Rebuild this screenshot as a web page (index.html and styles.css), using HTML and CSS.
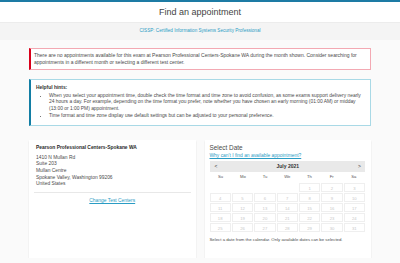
FILE: index.html
```html
<!DOCTYPE html>
<html lang="en">
<head>
<meta charset="utf-8">
<title>Find an appointment</title>
<link rel="stylesheet" href="styles.css">
</head>
<body>
<div class="topbar"></div>
<header class="page-head"><h1>Find an appointment</h1></header>
<div class="exam-band"><a href="#">CISSP: Certified Information Systems Security Professional</a></div>
<main class="content">
  <div class="alert">There are no appointments available for this exam at Pearson Professional Centers-Spokane WA during the month shown. Consider searching for appointments in a different month or selecting a different test center.</div>
  <div class="hints">
    <p class="hints-title">Helpful hints:</p>
    <ul>
      <li>When you select your appointment time, double check the time format and time zone to avoid confusion, as some exams support delivery nearly 24 hours a day. For example, depending on the time format you prefer, note whether you have chosen an early morning (01:00 AM) or midday (13:00 or 1:00 PM) appointment.</li>
      <li>Time format and time zone display use default settings but can be adjusted to your personal preference.</li>
    </ul>
  </div>
  <div class="cards">
    <section class="card">
      <p class="center-name">Pearson Professional Centers-Spokane WA</p>
      <address class="center-addr">1410 N Mullan Rd<br>Suite 203<br>Mullan Centre<br>Spokane Valley, Washington 99206<br>United States</address>
      <div class="card-foot"><a href="#">Change Test Centers</a></div>
    </section>
    <section class="card date-card">
      <h2>Select Date</h2>
      <a class="why" href="#">Why can't I find an available appointment?</a>
      <div class="cal">
        <div class="cal-head"><span>&lt;</span><strong>July 2021</strong><span>&gt;</span></div>
        <div class="cal-days"><span>Su</span><span>Mo</span><span>Tu</span><span>We</span><span>Th</span><span>Fr</span><span>Sa</span></div>
        <div class="cal-grid">
          <span class="blank"></span><span class="blank"></span><span class="blank"></span><span class="blank"></span>
          <span>1</span><span>2</span><span>3</span>
          <span>4</span><span>5</span><span>6</span><span>7</span><span>8</span><span>9</span><span>10</span>
          <span>11</span><span>12</span><span>13</span><span>14</span><span>15</span><span>16</span><span>17</span>
          <span>18</span><span>19</span><span>20</span><span>21</span><span>22</span><span>23</span><span>24</span>
          <span>25</span><span>26</span><span>27</span><span>28</span><span>29</span><span>30</span><span>31</span>
        </div>
      </div>
      <p class="cal-note">Select a date from the calendar. Only available dates can be selected.</p>
    </section>
  </div>
</main>
</body>
</html>
```
FILE: styles.css
```css
html, body {
  margin: 0;
  padding: 0;
}
body {
  font-family: "Liberation Sans", Arial, sans-serif;
  font-size: 4.9px;
  line-height: 6.7px;
  color: #4a4a4a;
  background: #fafafa;
}
a {
  color: #2a9cc4;
}
.topbar {
  height: 2px;
  background: #1d7ba4;
}
.page-head {
  height: 20px;
  background: #fff;
  display: flex;
  align-items: center;
  justify-content: center;
}
.page-head h1 {
  margin: 0;
  font-size: 9px;
  font-weight: normal;
  color: #444;
  line-height: 10px;
}
.exam-band {
  height: 18px;
  background: #f4f4f4;
  border-top: 1px solid #ececec;
  box-sizing: border-box;
  display: flex;
  align-items: center;
  justify-content: center;
}
.exam-band a {
  text-decoration: none;
  font-size: 4.6px;
}
.content {
  padding: 8px 29px 0;
}
.alert {
  background: #fff;
  border: 0.6px solid #f3a9b3;
  border-left: 2px solid #d9001b;
  padding: 3.3px 12px 3.3px 3px;
  font-size: 5px;
}
.hints {
  margin-top: 9px;
  background: #fff;
  border: 0.6px solid #a9d9e6;
  border-left: 2px solid #137ea4;
  padding: 4.5px 6px 5.5px 5px;
}
.hints-title {
  margin: 0 0 1.3px;
  font-weight: bold;
  color: #333;
}
.hints ul {
  margin: 0;
  padding-left: 13px;
}
.cards {
  margin-top: 14px;
  display: grid;
  grid-template-columns: 1fr 1fr;
  gap: 9px;
}
.card {
  background: #fff;
  height: 118px;
  box-sizing: border-box;
  padding: 5px 5px 0 7px;
  box-shadow: 0 0.5px 1.5px rgba(0,0,0,0.13);
}
.center-name {
  margin: 0 0 3px;
  font-weight: bold;
  color: #2a2a2a;
}
.center-addr {
  font-style: normal;
}
.card-foot {
  margin: 3.5px 0 0 -2px;
  border-top: 0.8px solid #e8e8e8;
  padding-top: 5px;
  text-align: center;
}
.date-card {
  padding: 4px 6px 0 5px;
}
.date-card h2 {
  margin: 0;
  font-size: 6.4px;
  line-height: 8px;
  font-weight: normal;
  color: #4a4a4a;
}
.why {
  display: block;
  line-height: 7px;
}
.cal {
  margin-top: 2px;
}
.cal-head {
  height: 11px;
  background: #e9e9e9;
  display: flex;
  align-items: center;
  justify-content: space-between;
  padding: 0 4px 0 5px;
  font-size: 5px;
  color: #333;
}
.cal-head strong {
  font-weight: bold;
}
.cal-days {
  display: grid;
  grid-template-columns: repeat(7, 1fr);
  height: 11px;
  align-items: center;
  text-align: center;
  font-size: 4.2px;
  color: #555;
}
.cal-grid {
  display: grid;
  grid-template-columns: repeat(7, 1fr);
  grid-auto-rows: 9px;
  gap: 1px;
  text-align: center;
  font-size: 4.2px;
  line-height: 9px;
  color: #c8c8c8;
}
.cal-grid span {
  border: 0.5px solid #efefef;
}
.cal-grid span.blank {
  border-color: transparent;
}
.cal-note {
  margin: 5px 0 0;
  font-size: 4.3px;
  color: #4a4a4a;
}
```
